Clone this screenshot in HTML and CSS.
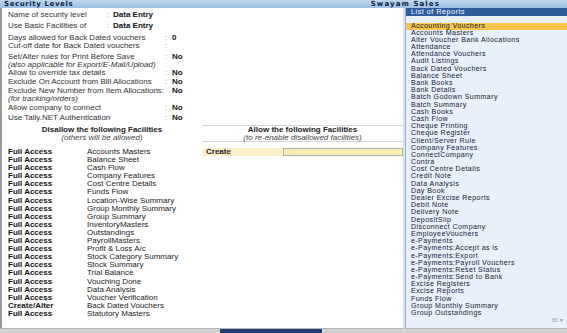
FILE: index.html
```html
<!DOCTYPE html>
<html lang="en">
<head>
<meta charset="UTF-8">
<title>Security Levels</title>
<link rel="stylesheet" href="styles.css">
</head>
<body>
<div class="screen">
    <header class="titlebar">
        <span class="title">Security Levels</span>
        <span class="company">Swayam Sales</span>
    </header>

    <div class="main">
        <section class="form">
            <div class="fields">
                <div class="field b1"><span class="label">Name of security level</span><span class="colon">:</span><span class="value">Data Entry</span></div>
                <div class="field b2"><span class="label">Use Basic Facilities of</span><span class="colon">:</span><span class="value">Data Entry</span></div>
                <div class="field wide b3"><span class="label">Days allowed for Back Dated vouchers<br>Cut-off date for Back Dated vouchers</span><span class="colon">:<br>:</span><span class="value">0</span></div>
                <div class="field wide b4"><span class="label">Set/Alter rules for Print Before Save<br><i>(also applicable for Export/E-Mail/Upload)</i></span><span class="colon">:</span><span class="value">No</span></div>
                <div class="field wide b5"><span class="label">Allow to override tax details</span><span class="colon">:</span><span class="value">No</span></div>
                <div class="field wide b6"><span class="label">Exclude On Account from Bill Allocations</span><span class="colon">:</span><span class="value">No</span></div>
                <div class="field wide b7"><span class="label">Exclude New Number from Item Allocations:<br><i>(for tracking/orders)</i></span><span class="colon"></span><span class="value">No</span></div>
                <div class="field wide b8"><span class="label">Allow company to connect</span><span class="colon">:</span><span class="value">No</span></div>
                <div class="field wide b9"><span class="label">Use Tally.NET Authentication</span><span class="colon">:</span><span class="value">No</span></div>
            </div>

            <div class="fac-head">
                <div class="head-cell plain">
                    <b>Disallow the following Facilities</b><br><i>(others will be allowed)</i>
                </div>
                <div class="head-cell">
                    <b>Allow the following Facilities</b><br><i>(to re-enable disallowed facilities)</i>
                </div>
            </div>

            <div class="fac-body">
                <div class="disallow" id="disallowList"></div>
                <div class="allow">
                    <div class="create-row">
                        <span class="create-label">Create</span>
                        <span class="create-input"></span>
                    </div>
                </div>
            </div>
        </section>

        <aside class="reports">
            <div class="reports-title">List of Reports</div>
            <ul class="report-list" id="reportList"></ul>
            <div class="more">83 &#9660;</div>
        </aside>
    </div>

    <footer class="statusbar"><span class="thumb"></span></footer>
</div>

<script>
    // rows of the disallow table: [access, facility]
    const disallowed = [
        ['Full Access', 'Accounts Masters'],
        ['Full Access', 'Balance Sheet'],
        ['Full Access', 'Cash Flow'],
        ['Full Access', 'Company Features'],
        ['Full Access', 'Cost Centre Details'],
        ['Full Access', 'Funds Flow'],
        ['Full Access', 'Location-Wise Summary'],
        ['Full Access', 'Group Monthly Summary'],
        ['Full Access', 'Group Summary'],
        ['Full Access', 'InventoryMasters'],
        ['Full Access', 'Outstandings'],
        ['Full Access', 'PayrollMasters'],
        ['Full Access', 'Profit & Loss A/c'],
        ['Full Access', 'Stock Category Summary'],
        ['Full Access', 'Stock Summary'],
        ['Full Access', 'Trial Balance'],
        ['Full Access', 'Vouching Done'],
        ['Full Access', 'Data Analysis'],
        ['Full Access', 'Voucher Verification'],
        ['Create/Alter', 'Back Dated Vouchers'],
        ['Full Access', 'Statutory Masters']
    ];

    const reports = [
        'Accounting Vouchers', 'Accounts Masters', 'Alter Voucher Bank Allocations',
        'Attendance', 'Attendance Vouchers', 'Audit Listings', 'Back Dated Vouchers',
        'Balance Sheet', 'Bank Books', 'Bank Details', 'Batch Godown Summary',
        'Batch Summary', 'Cash Books', 'Cash Flow', 'Cheque Printing', 'Cheque Register',
        'Client/Server Rule', 'Company Features', 'ConnectCompany', 'Contra',
        'Cost Centre Details', 'Credit Note', 'Data Analysis', 'Day Book',
        'Dealer Excise Reports', 'Debit Note', 'Delivery Note', 'DepositSlip',
        'Disconnect Company', 'EmployeeVouchers', 'e-Payments', 'e-Payments:Accept as is',
        'e-Payments:Export', 'e-Payments:Payroll Vouchers', 'e-Payments:Reset Status',
        'e-Payments:Send to Bank', 'Excise Registers', 'Excise Reports', 'Funds Flow',
        'Group Monthly Summary', 'Group Outstandings'
    ];

    const disallowList = document.getElementById('disallowList');
    disallowed.forEach(item => {
        const row = document.createElement('div');
        row.className = 'access-row';

        const level = document.createElement('span');
        level.className = 'level';
        level.textContent = item[0];
        row.appendChild(level);

        const name = document.createElement('span');
        name.textContent = item[1];
        row.appendChild(name);

        disallowList.appendChild(row);
    });

    const reportList = document.getElementById('reportList');
    reports.forEach((report, i) => {
        const li = document.createElement('li');
        li.textContent = report;
        if (i === 0) li.className = 'selected';
        reportList.appendChild(li);
    });
</script>
</body>
</html>
```

FILE: styles.css
```css
body {
    margin: 0;
    font-family: "Liberation Sans", Arial, sans-serif;
    font-size: 8px;
    color: #222;
}

.screen {
    width: 567px;
    height: 333px;
    display: flex;
    flex-direction: column;
    background: #fff;
    overflow: hidden;
}

/* top bar */
.titlebar {
    flex: none;
    height: 8px;
    display: flex;
    align-items: center;
    background: linear-gradient(#bed5ee, #9ebfe3);
    font-family: "DejaVu Sans", sans-serif;
    font-weight: bold;
    font-size: 7px;
    line-height: 8px;
    color: #0c1e44;
}

.titlebar .title {
    padding-left: 4px;
    letter-spacing: 0.6px;
}

.titlebar .company {
    margin-left: auto;
    margin-right: 127px;
    letter-spacing: 1.1px;
}

.main {
    flex: 1;
    display: flex;
    min-height: 0;
}

/* left form */
.form {
    width: 401px;
    border-left: 2px solid #9a9a9a;
    border-right: 2px solid #d6e2f0;
    border-bottom: 1px solid #b5b5b5;
}

.fields {
    padding: 3px 0 0 6px;
    color: #333;
}

.field {
    display: flex;
    align-items: flex-start;
    line-height: 8px;
    white-space: nowrap;
}

.field .label {
    width: 99px;
}

.field .colon {
    width: 6px;
    color: #999;
}

.field.wide .label {
    width: 157px;
}

.field.wide .colon {
    width: 7px;
}

.field .value {
    font-weight: bold;
    color: #111;
}

.b2 { margin-top: 3px; }
.b3 { margin-top: 4px; }
.b4 { margin-top: 3px; }
.b6, .b7, .b8 { margin-top: 1px; }
.b9 { margin-top: 2px; }

.fac-head {
    display: grid;
    grid-template-columns: 200px 1fr;
    margin-top: 3px;
    text-align: center;
    line-height: 7.5px;
}

.head-cell {
    border-top: 1px solid #d4d4d4;
    border-bottom: 1px solid #d4d4d4;
}

.head-cell.plain {
    border-color: transparent;
}

.head-cell i {
    color: #444;
}

.fac-body {
    display: grid;
    grid-template-columns: 200px 1fr;
    margin-top: 6px;
}

.access-row {
    display: flex;
    line-height: 8.1px;
    height: 8.1px;
    white-space: nowrap;
}

.access-row .level {
    width: 79px;
    padding-left: 6px;
    font-weight: bold;
    color: #111;
}

.create-row {
    display: flex;
    height: 8px;
    line-height: 8px;
}

.create-label {
    width: 77px;
    padding-left: 4px;
    background: #fdefc9;
    font-weight: bold;
}

.create-input {
    flex: 1;
    box-sizing: border-box;
    background: #fde9b2;
    border: 1px solid #9fb2ab;
}

/* right list */
.reports {
    flex: 1;
    display: flex;
    flex-direction: column;
    background: #e7f0fb;
    border-left: 1px solid #9db4d2;
    border-bottom: 1px solid #b5b5b5;
}

.reports-title {
    height: 7.5px;
    line-height: 7.5px;
    padding-left: 5px;
    background: #2f5d9b;
    color: #fff;
    font-size: 7px;
    letter-spacing: 0.6px;
}

.report-list {
    list-style: none;
    margin: 7px 0 0;
    padding: 0;
    font-size: 7.1px;
    letter-spacing: 0.4px;
    line-height: 7.2px;
    color: #14213a;
}

.report-list li {
    height: 7.2px;
    padding-left: 5px;
    white-space: nowrap;
}

.report-list li.selected {
    background: #f8c54c;
}

.more {
    text-align: right;
    padding-right: 3px;
    font-size: 5px;
    line-height: 6px;
    color: #8495ad;
}

/* bottom strip */
.statusbar {
    flex: none;
    height: 4px;
    display: flex;
    background: #d2d2d2;
}

.thumb {
    margin-left: 220px;
    width: 102px;
    background: #223d6d;
}
```
